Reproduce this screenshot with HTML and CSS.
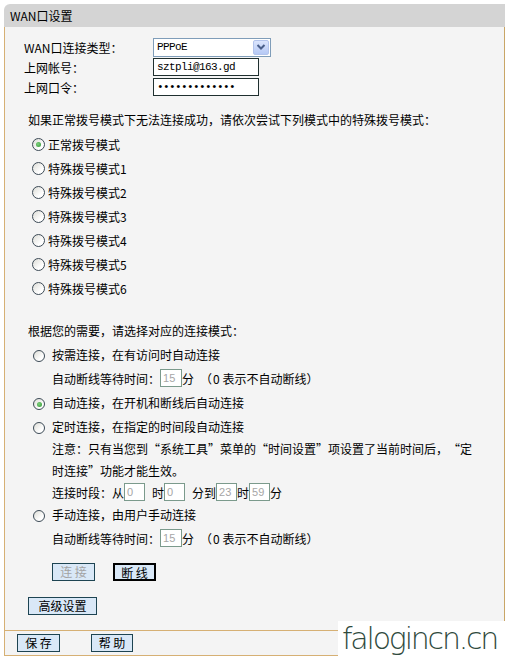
FILE: index.html
```html
<!DOCTYPE html>
<html lang="zh-CN">
<head>
<meta charset="utf-8">
<title>WAN口设置</title>
<link rel="stylesheet" href="styles.css">
</head>
<body>
<div class="frame">
  <div class="title">WAN口设置</div>
  <div class="panel">
    <div class="body">
      <div class="fields">
        <div class="field">
          <span class="label"><span class="latin">WAN</span>口连接类型：</span>
          <div class="select">
            <span class="select-value">PPPoE</span>
            <span class="select-arrow"><svg width="10" height="8" viewBox="0 0 10 8"><path d="M1.5 2 L5 5.5 L8.5 2" fill="none" stroke="#4a5f8a" stroke-width="2"/></svg></span>
          </div>
        </div>
        <div class="field">
          <span class="label">上网帐号：</span>
          <input class="text" type="text" value="sztpli@163.gd">
        </div>
        <div class="field">
          <span class="label">上网口令：</span>
          <input class="text" type="password" value="aaaaaaaaaaaaa">
        </div>
      </div>

      <div class="dial">
        <div class="prompt">如果正常拨号模式下无法连接成功，请依次尝试下列模式中的特殊拨号模式：</div>
        <div class="radio-row"><span class="radio on"></span>正常拨号模式</div>
        <div class="radio-row"><span class="radio"></span>特殊拨号模式1</div>
        <div class="radio-row"><span class="radio"></span>特殊拨号模式2</div>
        <div class="radio-row"><span class="radio"></span>特殊拨号模式3</div>
        <div class="radio-row"><span class="radio"></span>特殊拨号模式4</div>
        <div class="radio-row"><span class="radio"></span>特殊拨号模式5</div>
        <div class="radio-row"><span class="radio"></span>特殊拨号模式6</div>
      </div>

      <div class="mode">
        <div class="mode-prompt">根据您的需要，请选择对应的连接模式：</div>
        <div class="opt"><span class="radio small"></span>按需连接，在有访问时自动连接</div>
        <div class="sub">自动断线等待时间：<input class="mini wide" type="text" value="15" disabled>分<span class="hint"><span class="paren">（</span>0 表示不自动断线）</span></div>
        <div class="opt"><span class="radio small on"></span>自动连接，在开机和断线后自动连接</div>
        <div class="opt"><span class="radio small"></span>定时连接，在指定的时间段自动连接</div>
        <div class="note">注意：只有当您到“系统工具”菜单的“时间设置”项设置了当前时间后，“定<br>时连接”功能才能生效。</div>
        <div class="sub period">连接时段：从<input class="mini spaced" type="text" value="0" disabled>时<input class="mini spaced" type="text" value="0" disabled>分到<input class="mini" type="text" value="23" disabled>时<input class="mini" type="text" value="59" disabled>分</div>
        <div class="opt"><span class="radio small"></span>手动连接，由用户手动连接</div>
        <div class="sub">自动断线等待时间：<input class="mini wide" type="text" value="15" disabled>分<span class="hint"><span class="paren">（</span>0 表示不自动断线）</span></div>
      </div>

      <div class="actions">
        <button class="btn disabled" type="button">连 接</button>
        <button class="btn default" type="button">断 线</button>
      </div>

      <div class="adv">
        <button class="btn adv-btn" type="button">高级设置</button>
      </div>
    </div>
    <div class="footer">
      <button class="btn" type="button">保 存</button>
      <button class="btn help" type="button">帮 助</button>
    </div>
  </div>
</div>
<div class="watermark">falogincn.cn</div>
</body>
</html>
```

FILE: styles.css
```css
* {
  box-sizing: border-box;
}

body {
  margin: 0;
  background: #ffffff;
  font-family: "Noto Sans CJK SC", sans-serif;
  font-size: 12px;
  color: #000000;
  text-spacing-trim: space-all;
}

.frame {
  margin: 4px 0 0 4px;
  width: 501px;
}

.title {
  height: 23px;
  line-height: 23px;
  padding-left: 6px;
  background: #d4d4d4;
  border-top-left-radius: 6px;
}

.panel {
  background: #f4f4f4;
  border-left: 1px solid #d6b074;
  border-right: 1px solid #c9a666;
  border-bottom: 1px solid #d6b074;
}

.body {
  padding: 10px 0 15px 0;
}

.field {
  display: flex;
  align-items: center;
  height: 20px;
  padding-left: 19px;
}

.label {
  width: 129px;
  flex-shrink: 0;
  font-variant-east-asian: full-width;
}

.latin {
  font-variant-east-asian: normal;
}

.select {
  width: 118px;
  height: 19px;
  border: 1px solid #7f9db9;
  background: #ffffff;
  display: flex;
  align-items: center;
  justify-content: space-between;
  padding: 0 1px 0 3px;
}

.select-value,
.text {
  font-family: "Liberation Mono", monospace;
  font-size: 11px;
  letter-spacing: -0.6px;
}

.select-arrow {
  width: 16px;
  height: 15px;
  background: linear-gradient(#dbe5fd, #b6c9f5);
  border: 1px solid #b3c4ec;
  border-radius: 2px;
  display: flex;
  align-items: center;
  justify-content: center;
}

.text {
  width: 106px;
  height: 18px;
  margin: 0;
  padding: 0 3px;
  border: 1px solid #1f2f2f;
  background: #ffffff;
  color: #000000;
  outline: none;
}

.dial {
  margin-top: 10px;
}

.prompt {
  height: 25px;
  display: flex;
  align-items: center;
  padding-left: 23px;
  font-variant-east-asian: full-width;
}

.radio-row {
  height: 24px;
  display: flex;
  align-items: center;
  padding-left: 27px;
}

.radio {
  width: 13px;
  height: 13px;
  flex-shrink: 0;
  border-radius: 50%;
  border: 1px solid #3c4a56;
  background: linear-gradient(135deg, #dcdcd6, #ffffff 70%);
  display: flex;
  align-items: center;
  justify-content: center;
  margin-right: 3px;
}

.radio.on::after {
  content: "";
  width: 5px;
  height: 5px;
  border-radius: 50%;
  background: radial-gradient(circle at 40% 40%, #7fd07f, #2e962e);
}

.radio.small {
  width: 12px;
  height: 12px;
  margin-left: 1px;
  margin-right: 7px;
  margin-top: 4px;
}

.mode {
  margin-top: 18px;
}

.mode-prompt {
  height: 24px;
  display: flex;
  align-items: center;
  padding-left: 23px;
  font-variant-east-asian: full-width;
}

.opt {
  height: 24px;
  display: flex;
  align-items: center;
  padding-left: 27px;
  font-variant-east-asian: full-width;
}

.sub {
  height: 24px;
  display: flex;
  align-items: center;
  padding-left: 47px;
  white-space: pre;
}

.sub.period {
  height: 20px;
}

.hint {
  margin-left: 6px;
}

.paren {
  display: inline-block;
  width: 12px;
  text-align: right;
  margin-right: 1px;
}

.note {
  padding-left: 47px;
  line-height: 22px;
  font-variant-east-asian: full-width;
}

.mini {
  width: 21px;
  height: 18px;
  margin: 0;
  padding: 0 2px;
  border: 1px solid #7b9a8c;
  background: #ffffff;
  color: #a6a6a6;
  font-family: "Liberation Sans", sans-serif;
  font-size: 11px;
}

.mini.spaced {
  margin-right: 7px;
}

.mini.wide {
  width: 22px;
}

.actions {
  margin-top: 13px;
  padding-left: 47px;
  display: flex;
  gap: 18px;
}

.btn {
  width: 43px;
  height: 18px;
  padding: 0;
  margin: 0;
  border: 1px solid #1d4452;
  background: #d9e8f7;
  color: #000000;
  font-family: "Noto Sans CJK SC", sans-serif;
  font-size: 12px;
  line-height: 16px;
}

.btn.disabled {
  color: #a3a3a3;
}

.btn.default {
  border: 2px solid #000000;
}

.adv {
  margin-top: 16px;
  padding-left: 23px;
}

.btn.adv-btn {
  width: 69px;
}

.footer {
  border-top: 1px solid #d6b074;
  padding: 3px 0 3px 12px;
  display: flex;
  gap: 31px;
}

.btn.help {
  width: 42px;
}

.watermark {
  position: absolute;
  left: 338px;
  top: 621px;
  width: 170px;
  height: 41px;
  background: #ffffff;
  color: #2f4a3d;
  font-family: "DejaVu Sans", sans-serif;
  font-weight: 200;
  font-size: 30px;
  line-height: 36px;
  padding-left: 4px;
  letter-spacing: -2.2px;
  white-space: nowrap;
  overflow: hidden;
}
```
